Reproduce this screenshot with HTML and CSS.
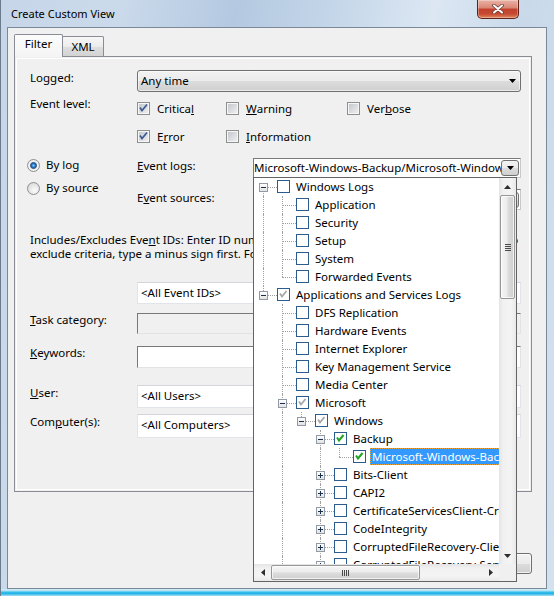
FILE: index.html
```html
<!DOCTYPE html>
<html>
<head>
<meta charset="utf-8">
<title>Create Custom View</title>
<link rel="stylesheet" href="styles.css">
</head>
<body>
<div class="window">
  <div class="titlebar">
    <span class="title">Create Custom View</span>
    <div class="close">
      <svg width="12" height="10" viewBox="0 0 12 10"><path class="xs" d="M2 1.5 L10 8.5 M10 1.5 L2 8.5"/><path class="xw" d="M2 1.5 L10 8.5 M10 1.5 L2 8.5"/></svg>
    </div>
  </div>
  <div class="client">
    <div class="tabs">
      <div class="tab active">Filter</div>
      <div class="tab xml">XML</div>
    </div>
    <div class="panel">
      <div class="row logged">
        <span class="lbl">Log<u>g</u>ed:</span>
        <div class="combo">Any time<svg class="arr" width="7" height="4" viewBox="0 0 7 4"><path d="M0 0H7L3.5 4Z"/></svg></div>
      </div>
      <div class="row level">
        <span class="lbl">Event level:</span>
        <div class="checks">
          <div class="chk"><span class="cb"><svg width="11" height="11" viewBox="0 0 11 11"><path d="M2 4.5 L4 7.5 L9 1.5"/></svg></span>Critica<u>l</u></div>
          <div class="chk"><span class="cb"></span><u>W</u>arning</div>
          <div class="chk"><span class="cb"></span>Ver<u>b</u>ose</div>
          <div class="chk"><span class="cb"><svg width="11" height="11" viewBox="0 0 11 11"><path d="M2 4.5 L4 7.5 L9 1.5"/></svg></span>E<u>r</u>ror</div>
          <div class="chk"><span class="cb"></span><u>I</u>nformation</div>
        </div>
      </div>
      <div class="logsec">
        <div class="radios">
          <div class="radio"><span class="rb on"></span>By log</div>
          <div class="radio"><span class="rb"></span>By source</div>
        </div>
        <div class="sublbls">
          <span><u>E</u>vent logs:</span>
          <span>E<u>v</u>ent sources:</span>
        </div>
        <div class="combos">
          <div class="ecombo"><span class="etext">Microsoft-Windows-Backup/Microsoft-Windows-Backup</span><span class="dbtn"><svg width="7" height="4" viewBox="0 0 7 4"><path d="M0 0H7L3.5 4Z"/></svg></span></div>
          <div class="ecombo src"><span class="etext"></span><span class="dbtn"><svg width="7" height="4" viewBox="0 0 7 4"><path d="M0 0H7L3.5 4Z"/></svg></span></div>
        </div>
      </div>
      <p class="idtext">Includes/Excludes Eve<u>n</u>t IDs: Enter ID numbers and/or ID ranges separated by commas. To<br>exclude criteria, type a minus sign first. For example 1,3,5-99,-76</p>
      <div class="field f-ids"><span class="lbl"></span><div class="tbox">&lt;All Event IDs&gt;</div></div>
      <div class="field f-task"><span class="lbl"><u>T</u>ask category:</span><div class="tbox sunk dis"></div></div>
      <div class="field f-kw"><span class="lbl"><u>K</u>eywords:</span><div class="tbox sunk"></div></div>
      <div class="field f-user"><span class="lbl"><u>U</u>ser:</span><div class="tbox">&lt;All Users&gt;</div></div>
      <div class="field f-comp"><span class="lbl">Com<u>p</u>uter(s):</span><div class="tbox">&lt;All Computers&gt;</div></div>
    </div>
    <div class="buttons">
      <div class="btn">OK</div>
      <div class="btn">Cancel</div>
    </div>
  </div>

  <div class="dropdown">
    <div class="tree">
      <div class="n"><span class="c o b"><i class="x"></i></span><span class="tcb"></span><span class="tl">Windows Logs</span></div>
      <div class="n"><span class="c v"></span><span class="c o t b"></span><span class="tcb"></span><span class="tl">Application</span></div>
      <div class="n"><span class="c v"></span><span class="c o t b"></span><span class="tcb"></span><span class="tl">Security</span></div>
      <div class="n"><span class="c v"></span><span class="c o t b"></span><span class="tcb"></span><span class="tl">Setup</span></div>
      <div class="n"><span class="c v"></span><span class="c o t b"></span><span class="tcb"></span><span class="tl">System</span></div>
      <div class="n"><span class="c v"></span><span class="c o t"></span><span class="tcb"></span><span class="tl">Forwarded Events</span></div>
      <div class="n"><span class="c o t"><i class="x"></i></span><span class="tcb part"><svg width="11" height="11" viewBox="0 0 11 11"><path d="M2 4.5 L4 7.5 L8.5 2"/></svg></span><span class="tl">Applications and Services Logs</span></div>
      <div class="n"><span class="c"></span><span class="c o t b"></span><span class="tcb"></span><span class="tl">DFS Replication</span></div>
      <div class="n"><span class="c"></span><span class="c o t b"></span><span class="tcb"></span><span class="tl">Hardware Events</span></div>
      <div class="n"><span class="c"></span><span class="c o t b"></span><span class="tcb"></span><span class="tl">Internet Explorer</span></div>
      <div class="n"><span class="c"></span><span class="c o t b"></span><span class="tcb"></span><span class="tl">Key Management Service</span></div>
      <div class="n"><span class="c"></span><span class="c o t b"></span><span class="tcb"></span><span class="tl">Media Center</span></div>
      <div class="n"><span class="c"></span><span class="c o t b"><i class="x"></i></span><span class="tcb part"><svg width="11" height="11" viewBox="0 0 11 11"><path d="M2 4.5 L4 7.5 L8.5 2"/></svg></span><span class="tl">Microsoft</span></div>
      <div class="n"><span class="c"></span><span class="c v"></span><span class="c o t"><i class="x"></i></span><span class="tcb part"><svg width="11" height="11" viewBox="0 0 11 11"><path d="M2 4.5 L4 7.5 L8.5 2"/></svg></span><span class="tl">Windows</span></div>
      <div class="n"><span class="c"></span><span class="c v"></span><span class="c"></span><span class="c o t b"><i class="x"></i></span><span class="tcb full"><svg width="11" height="11" viewBox="0 0 11 11"><path d="M2 4.5 L4 7.5 L8.5 2"/></svg></span><span class="tl">Backup</span></div>
      <div class="n"><span class="c"></span><span class="c v"></span><span class="c"></span><span class="c v"></span><span class="c o t"></span><span class="tcb full"><svg width="11" height="11" viewBox="0 0 11 11"><path d="M2 4.5 L4 7.5 L8.5 2"/></svg></span><span class="tl sel">Microsoft-Windows-Backup</span></div>
      <div class="n"><span class="c"></span><span class="c v"></span><span class="c"></span><span class="c o t b"><i class="x plus"></i></span><span class="tcb"></span><span class="tl">Bits-Client</span></div>
      <div class="n"><span class="c"></span><span class="c v"></span><span class="c"></span><span class="c o t b"><i class="x plus"></i></span><span class="tcb"></span><span class="tl">CAPI2</span></div>
      <div class="n"><span class="c"></span><span class="c v"></span><span class="c"></span><span class="c o t b"><i class="x plus"></i></span><span class="tcb"></span><span class="tl">CertificateServicesClient-CredentialRoaming</span></div>
      <div class="n"><span class="c"></span><span class="c v"></span><span class="c"></span><span class="c o t b"><i class="x plus"></i></span><span class="tcb"></span><span class="tl">CodeIntegrity</span></div>
      <div class="n"><span class="c"></span><span class="c v"></span><span class="c"></span><span class="c o t b"><i class="x plus"></i></span><span class="tcb"></span><span class="tl">CorruptedFileRecovery-Client</span></div>
      <div class="n"><span class="c"></span><span class="c v"></span><span class="c"></span><span class="c o t b"><i class="x plus"></i></span><span class="tcb"></span><span class="tl">CorruptedFileRecovery-Server</span></div>
    </div>
    <div class="vsb">
      <div class="sbtn"><svg width="7" height="4" viewBox="0 0 7 4"><path d="M0 4H7L3.5 0Z"/></svg></div>
      <div class="vthumb"><span class="grip"></span></div>
      <div class="sfill"></div>
      <div class="sbtn"><svg width="7" height="4" viewBox="0 0 7 4"><path d="M0 0H7L3.5 4Z"/></svg></div>
    </div>
    <div class="hsb">
      <div class="sbtn"><svg width="4" height="7" viewBox="0 0 4 7"><path d="M4 0V7L0 3.5Z"/></svg></div>
      <div class="hthumb"><span class="grip"></span></div>
      <div class="sfill"></div>
      <div class="sbtn"><svg width="4" height="7" viewBox="0 0 4 7"><path d="M0 0V7L4 3.5Z"/></svg></div>
    </div>
    <div class="corner"></div>
  </div>
</div>
</body>
</html>
```

FILE: styles.css
```css
* { box-sizing: border-box; }
html, body { margin: 0; padding: 0; }
body {
  width: 554px;
  height: 596px;
  overflow: hidden;
  font-family: "Noto Sans", "Open Sans", sans-serif;
  font-size: 11.5px;
  color: #000;
  background: #c5d6e9;
}
u { text-decoration: underline; text-underline-offset: 1px; }

.window {
  position: relative;
  width: 554px;
  height: 596px;
  display: flex;
  flex-direction: column;
  padding: 0 7px 7px 7px;
  background:
    linear-gradient(to bottom, transparent 589px, #d4eef7 589px, #a9e0f2 591px, #33bfea 592px, #23b2e6 594px, #8ed6ef 595px),
    linear-gradient(100deg, #c6d6e8 0%, #cbdaeb 18%, #b4c9e1 36%, #c3d5e8 50%, #dce7f3 66%, #c9d9ea 80%, #d4e1ef 100%);
  box-shadow: inset 1px 0 0 #6b7b8c;
}

.titlebar {
  height: 27px;
  flex: none;
  display: flex;
  align-items: flex-start;
}
.title {
  font-size: 11px;
  line-height: 16px;
  margin: 6px 0 0 4px;
}
.close {
  margin-left: auto;
  margin-right: 28px;
  width: 42px;
  height: 19px;
  border: 1px solid #5e2219;
  border-top: none;
  border-radius: 0 0 5px 5px;
  background: linear-gradient(#eab3a6 0%, #da8574 45%, #c3412c 50%, #c64a31 78%, #e08a5e 100%);
  box-shadow: inset 0 0 0 1px rgba(255, 255, 255, 0.3);
  display: flex;
  align-items: center;
  justify-content: center;
}
.close svg { display: block; }
.close .xs { stroke: #6a3b33; stroke-width: 3.6; fill: none; stroke-linecap: round; }
.close .xw { stroke: #fff; stroke-width: 2; fill: none; stroke-linecap: round; }

.client {
  flex: 1;
  display: flex;
  flex-direction: column;
  border: 1px solid #7b8897;
  background: #f0f0f0;
  padding: 6px 14px 0 6px;
}

.tabs {
  display: flex;
  align-items: flex-end;
  height: 22px;
  flex: none;
}
.tab {
  line-height: 16px;
  border: 1px solid #898c95;
  border-bottom: none;
  border-radius: 2px 2px 0 0;
  padding: 2px 0 0 0;
  text-align: center;
}
.tab.active {
  width: 49px;
  height: 23px;
  margin-bottom: -1px;
  position: relative;
  z-index: 1;
  background: linear-gradient(#fcfcfc, #f4f4f4);
  padding-top: 1px;
}
.tab.xml {
  width: 42px;
  height: 20px;
  margin-left: -1px;
  padding-top: 2px;
  background: linear-gradient(#f7f7f7 0%, #ececec 50%, #dedede 52%, #d3d3d3 100%);
}

.panel {
  height: 436px;
  flex: none;
  border: 1px solid #898c95;
  background: #f0f0f0;
  box-shadow: inset 0 0 0 1px #f0f0f0, inset 0 0 0 2px #ffffff;
  padding: 0 10px 0 15px;
  display: flex;
  flex-direction: column;
}
.lbl { width: 107px; flex: none; line-height: 16px; }

.row { display: flex; align-items: flex-start; }
.logged { margin-top: 13px; }
.combo {
  flex: 1;
  height: 22px;
  display: flex;
  align-items: center;
  padding: 0 4px 0 3px;
  border: 1px solid #707070;
  border-radius: 3px;
  background: linear-gradient(#f2f2f2 0%, #ebebeb 50%, #dddddd 50%, #cfcfcf 100%);
  box-shadow: inset 0 0 0 1px rgba(255, 255, 255, 0.6);
  line-height: 16px;
}
.combo .arr { margin-left: auto; display: block; }
.arr path, .dbtn path, .sbtn path { fill: #000; }

.level { margin-top: 4px; }
.checks {
  display: grid;
  grid-template-columns: 89px 121px max-content;
  row-gap: 12px;
  padding-top: 4px;
}
.chk { display: flex; align-items: center; height: 16px; }
.cb {
  width: 13px;
  height: 13px;
  flex: none;
  margin-right: 7px;
  border: 1px solid #8e8f8f;
  padding: 1px;
  background: linear-gradient(135deg, #c4c8cd, #eeeeef) content-box, #f6f6f6;
}
.cb svg { display: block; margin: -1px; }
.cb path { fill: none; stroke: #3d5a93; stroke-width: 1.7; }

.logsec { display: flex; margin-top: 13px; }
.radios {
  flex: none;
  width: 110px;
  margin-left: -3px;
  display: flex;
  flex-direction: column;
  gap: 7px;
}
.radio { display: flex; align-items: center; height: 16px; line-height: 16px; }
.rb {
  width: 13px;
  height: 13px;
  flex: none;
  margin-right: 6px;
  border-radius: 50%;
  border: 1px solid #8e8f8f;
  background: radial-gradient(circle at 60% 65%, #fbfbfb 0, #e9e9e9 45%, #cdd0d4 100%);
}
.rb.on {
  background: radial-gradient(circle at 50% 50%, #8fd3ff 0, #2f86d8 1.5px, #1a4f98 2.6px, #6f7f93 3.3px, #f4f4f4 3.8px, #e6e6e6 100%);
}
.sublbls {
  flex: none;
  width: 116px;
  display: flex;
  flex-direction: column;
  gap: 16px;
  padding-top: 1px;
  line-height: 16px;
}
.combos {
  flex: 1;
  min-width: 0;
  display: flex;
  flex-direction: column;
  gap: 11px;
  padding-top: 1px;
}
.ecombo {
  height: 20px;
  min-width: 0;
  display: flex;
  align-items: center;
  border: 1px solid #7a7a7a;
  border-right-color: #c9c9c9;
  border-bottom-color: #c9c9c9;
  background: #fff;
  padding: 0 1px 0 0;
}
.ecombo.src { height: 21px; }
.etext {
  flex: 1;
  min-width: 0;
  overflow: hidden;
  white-space: nowrap;
  line-height: 16px;
}
.dbtn {
  width: 18px;
  height: 16px;
  flex: none;
  display: flex;
  align-items: center;
  justify-content: center;
  border: 1px solid #707070;
  border-radius: 3px;
  background: linear-gradient(#f2f2f2 0%, #ebebeb 50%, #dddddd 50%, #cfcfcf 100%);
}
.dbtn svg { display: block; }

.idtext {
  margin: 23px 0 0 0;
  line-height: 14px;
  white-space: nowrap;
  overflow: hidden;
}

.field { display: flex; align-items: flex-start; }
.tbox {
  flex: 1;
  height: 22px;
  line-height: 16px;
  padding: 2px 3px 0 3px;
  background: #fff;
  border: 1px solid #e1e4e8;
  border-top-color: #d2d5da;
}
.tbox.sunk { border-color: #787878 #e3e3e3 #e3e3e3 #787878; }
.tbox.dis { background: #f0f0f0; }
.f-ids { margin-top: 21px; }
.f-task { margin-top: 9px; }
.f-task .tbox { height: 21px; }
.f-kw { margin-top: 12px; }
.f-user { margin-top: 17px; }
.f-user .tbox { height: 23px; }
.f-comp { margin-top: 6px; }
.f-comp .tbox { height: 24px; }
.f-task .lbl, .f-kw .lbl { margin-top: -1px; }
.f-user .lbl, .f-comp .lbl { margin-top: 0; }
.f-ids .tbox, .f-user .tbox, .f-comp .tbox { padding-top: 2px; }

.buttons {
  display: flex;
  justify-content: flex-end;
  gap: 6px;
  margin-top: 61px;
}
.btn {
  width: 75px;
  height: 21px;
  border: 1px solid #707070;
  border-radius: 3px;
  background: linear-gradient(#f2f2f2 0%, #ebebeb 50%, #dddddd 50%, #cfcfcf 100%);
  box-shadow: inset 0 0 0 1px rgba(255, 255, 255, 0.7);
  text-align: center;
  line-height: 18px;
}

/* dropdown tree */
.dropdown {
  position: absolute;
  left: 253px;
  top: 177px;
  width: 264px;
  height: 405px;
  border: 1px solid #646464;
  background: #fff;
  display: grid;
  grid-template-columns: 245px 17px;
  grid-template-rows: 386px 17px;
  z-index: 5;
}
.tree {
  overflow: hidden;
  padding-left: 0;
}
.n {
  height: 18px;
  display: flex;
  align-items: flex-start;
  white-space: nowrap;
}
.c {
  width: 19px;
  height: 18px;
  flex: none;
  position: relative;
}
.c.v::before,
.c.o::before {
  content: "";
  position: absolute;
  left: 9px;
  top: 0;
  bottom: 0;
  border-left: 1px dotted #a0a0a0;
}
.c.o::before { display: none; }
.c.o.t::before { display: block; top: 0; bottom: 9px; }
.c.o.b::before { display: block; top: 9px; bottom: 0; }
.c.o.t.b::before { top: 0; bottom: 0; }
.c.o::after {
  content: "";
  position: absolute;
  left: 9px;
  top: 9px;
  width: 14px;
  border-top: 1px dotted #a0a0a0;
}
.x {
  position: relative;
  z-index: 1;
  display: block;
  width: 9px;
  height: 9px;
  margin: 5px 0 0 5px;
  border: 1px solid #919aa5;
  background: linear-gradient(#ffffff, #e2e2e2);
}
.x::before {
  content: "";
  position: absolute;
  left: 1px;
  top: 3px;
  width: 5px;
  height: 1px;
  background: #1b2f4a;
}
.x.plus::after {
  content: "";
  position: absolute;
  left: 3px;
  top: 1px;
  width: 1px;
  height: 5px;
  background: #1b2f4a;
}
.tcb {
  width: 13px;
  height: 13px;
  flex: none;
  margin: 2px 4px 0 4px;
  border: 1px solid #2c5b8e;
  background: #fff;
}
.tcb svg { display: block; }
.tcb path { fill: none; stroke-width: 1.8; }
.tcb.part path { stroke: #a7a7a7; }
.tcb.full path { stroke: #23a323; stroke-width: 2; }
.tl {
  line-height: 17px;
  height: 17px;
  padding: 0 2px;
  margin-top: 0;
}
.tl.sel {
  background: #3399ff;
  color: #fff;
  outline: 1px dotted #e8a13a;
  outline-offset: -1px;
}

.vsb {
  display: flex;
  flex-direction: column;
  background: linear-gradient(90deg, #e4e4e4 0%, #f1f1f1 25%, #f4f4f4 70%, #e9e9e9 100%);
}
.hsb {
  display: flex;
  background: linear-gradient(#e4e4e4 0%, #f1f1f1 25%, #f4f4f4 70%, #e9e9e9 100%);
}
.sbtn {
  width: 17px;
  height: 17px;
  flex: none;
  display: flex;
  align-items: center;
  justify-content: center;
}
.sbtn path { fill: #2e2e2e; }
.sfill { flex: 1; }
.vthumb {
  height: 104px;
  margin: 0 1px;
  border: 1px solid #979797;
  border-radius: 2px;
  background: linear-gradient(90deg, #f5f5f5 0%, #ececec 45%, #dcdcdc 55%, #cfcfcf 100%);
  box-shadow: inset 0 0 0 1px rgba(255, 255, 255, 0.7);
  display: flex;
  align-items: center;
  justify-content: center;
}
.vthumb .grip {
  width: 6px;
  height: 7px;
  background: repeating-linear-gradient(#4a4a4a 0, #4a4a4a 1px, transparent 1px, transparent 2px);
}
.hthumb {
  width: 149px;
  margin: 1px 0;
  border: 1px solid #979797;
  border-radius: 2px;
  background: linear-gradient(#f5f5f5 0%, #ececec 45%, #dcdcdc 55%, #cfcfcf 100%);
  box-shadow: inset 0 0 0 1px rgba(255, 255, 255, 0.7);
  display: flex;
  align-items: center;
  justify-content: center;
}
.hthumb .grip {
  width: 7px;
  height: 6px;
  background: repeating-linear-gradient(90deg, #4a4a4a 0, #4a4a4a 1px, transparent 1px, transparent 2px);
}
.corner { background: #f0f0f0; }
```
